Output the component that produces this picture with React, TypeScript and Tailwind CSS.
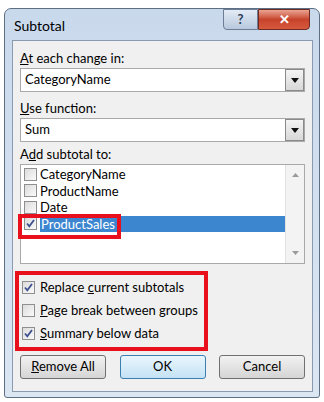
import React from "react";

const font = { fontFamily: 'Lato, "Noto Sans", Arial, sans-serif' };

const Check = ({ checked }: { checked?: boolean }) => (
  <span className="w-[13px] h-[13px] border border-[#8f8f8f] bg-gradient-to-br from-[#dcdcdc] to-[#fafafa] flex items-center justify-center shrink-0">
    {checked && (
      <svg width="11" height="11" viewBox="0 0 11 11">
        <path d="M2 5.5 L4.3 8.3 L9 2" stroke="#3d4f8f" strokeWidth="1.8" fill="none" />
      </svg>
    )}
  </span>
);

const Combo = ({ value }: { value: string }) => (
  <div className="h-[24px] border border-[#a9a9a9] bg-white flex items-center">
    <span className="flex-1 pl-[4px] text-[13px] text-black">{value}</span>
    <span className="w-[19px] h-[22px] border border-[#8a8a8a] bg-gradient-to-b from-[#f4f4f4] to-[#d8d8d8] flex items-center justify-center">
      <svg width="8" height="5" viewBox="0 0 8 5">
        <path d="M0 0 H8 L4 5 Z" fill="#111" />
      </svg>
    </span>
  </div>
);

const Btn = ({ children, primary }: { children: React.ReactNode; primary?: boolean }) => (
  <div
    className={`w-[86px] h-[24px] rounded-[3px] border flex items-center justify-center text-[13px] text-black bg-gradient-to-b ${
      primary
        ? "border-[#3c7fb1] from-[#eaf6fd] to-[#c4e2f5]"
        : "border-[#707070] from-[#f2f2f2] to-[#d5d5d5]"
    }`}
  >
    {children}
  </div>
);

export default function App() {
  return (
    <div className="w-[324px] h-[402px] bg-white pt-[8px] px-[4px]" style={font}>
      <div className="h-[390px] rounded-t-[7px] rounded-b-[3px] border border-[#5e6f84] bg-gradient-to-b from-[#c9d9ec] to-[#dbe6f3] pl-[7px] pr-[6px] flex flex-col">
        <div className="h-[31px] flex items-start">
          <span className="pl-[2px] pt-[6px] text-[14px] text-black">Subtotal</span>
          <div className="ml-auto mr-[3px] flex">
            <div className="w-[35px] h-[21px] border border-[#6c7c94] rounded-bl-[4px] bg-gradient-to-b from-[#e3ebf5] to-[#b7c8dd] flex items-center justify-center text-[#2a3b55] text-[13px] font-bold">
              ?
            </div>
            <div className="w-[52px] h-[21px] border border-[#6c2a22] rounded-br-[4px] bg-gradient-to-b from-[#e8a493] via-[#c7432c] to-[#d75a3d] flex items-center justify-center text-white text-[13px] font-bold">
              ✕
            </div>
          </div>
        </div>
        <div className="flex-1 mb-[5px] border border-[#8a9ab0] bg-[#f0f0f0] px-[7px] pt-[9px] flex flex-col">
          <span className="text-[13px] leading-[16px] text-black">
            <u>A</u>t each change in:
          </span>
          <div className="mt-[2px]">
            <Combo value="CategoryName" />
          </div>
          <span className="mt-[8px] text-[13px] leading-[16px] text-black">
            <u>U</u>se function:
          </span>
          <div className="mt-[2px]">
            <Combo value="Sum" />
          </div>
          <span className="mt-[4px] text-[13px] leading-[16px] text-black">
            A<u>d</u>d subtotal to:
          </span>
          <div className="mt-[2px] h-[100px] border border-[#a9a9a9] bg-white flex">
            <div className="flex-1 pt-[1px] pl-[3px] flex flex-col">
              {["CategoryName", "ProductName", "Date", "ProductSales"].map((n, i) => (
                <div key={n} className="h-[16.5px] flex items-center gap-[3px]">
                  <Check checked={i === 3} />
                  {i === 3 ? (
                    <span className="relative flex-1 h-[16px] bg-[#3c86d0] text-white text-[13px] leading-[16px] pl-[1px]">
                      {n}
                      <span className="absolute left-[-22px] top-[-2px] w-[103px] h-[25px] border-[4px] border-[#e8101d]" />
                    </span>
                  ) : (
                    <span className="text-[13px] leading-[16px] text-black">{n}</span>
                  )}
                </div>
              ))}
            </div>
            <div className="w-[19px] bg-[#f3f3f3] border-l border-[#e2e2e2] flex flex-col justify-between items-center py-[8px]">
              <svg width="7" height="4" viewBox="0 0 7 4">
                <path d="M0 4 L3.5 0 L7 4 Z" fill="#9a9a9a" />
              </svg>
              <svg width="7" height="4" viewBox="0 0 7 4">
                <path d="M0 0 H7 L3.5 4 Z" fill="#9a9a9a" />
              </svg>
            </div>
          </div>
          <div className="mt-[7px] ml-[-5px] w-[193px] h-[80px] border-[4px] border-[#e8101d] pl-[3px] pt-[4px] flex flex-col gap-[6px]">
            <div className="flex items-center gap-[5px] h-[17px]">
              <Check checked />
              <span className="text-[13px] text-black whitespace-nowrap">
                Replace <u>c</u>urrent subtotals
              </span>
            </div>
            <div className="flex items-center gap-[5px] h-[17px]">
              <Check />
              <span className="text-[13px] text-black whitespace-nowrap">
                <u>P</u>age break between groups
              </span>
            </div>
            <div className="flex items-center gap-[5px] h-[17px]">
              <Check checked />
              <span className="text-[13px] text-black whitespace-nowrap">
                <u>S</u>ummary below data
              </span>
            </div>
          </div>
          <div className="mt-[4px] flex justify-between">
            <Btn>
              <span>
                <u>R</u>emove All
              </span>
            </Btn>
            <Btn primary>OK</Btn>
            <Btn>Cancel</Btn>
          </div>
        </div>
      </div>
    </div>
  );
}
